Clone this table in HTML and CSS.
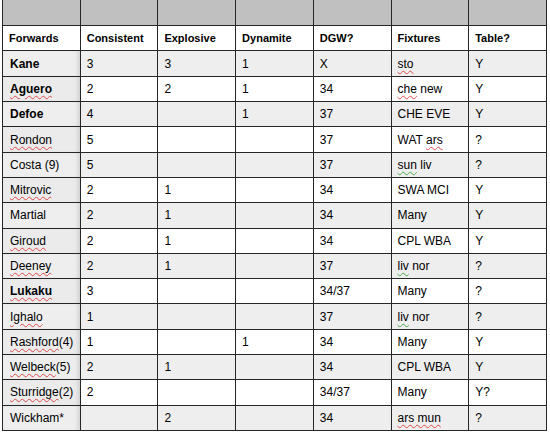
FILE: index.html
```html
<!DOCTYPE html>
<html>
<head>
<meta charset="utf-8">
<link rel="stylesheet" href="styles.css">
</head>
<body>
<table class="sheet">
  <tr class="band"><td></td><td></td><td></td><td></td><td></td><td></td><td></td></tr>
  <tr class="head"><td>Forwards</td><td>Consistent</td><td>Explosive</td><td>Dynamite</td><td>DGW?</td><td>Fixtures</td><td>Table?</td></tr>
  <tr class="alt"><td class="name"><b>Kane</b></td><td>3</td><td>3</td><td>1</td><td>X</td><td><span class="sp">sto</span></td><td>Y</td></tr>
  <tr><td class="name"><b class="sp">Aguero</b></td><td>2</td><td>2</td><td>1</td><td>34</td><td><span class="sp">che</span> new</td><td>Y</td></tr>
  <tr class="alt"><td class="name"><b>Defoe</b></td><td>4</td><td></td><td>1</td><td>37</td><td>CHE EVE</td><td>Y</td></tr>
  <tr><td class="name"><span class="sp">Rondon</span></td><td>5</td><td></td><td></td><td>37</td><td>WAT <span class="sp">ars</span></td><td>?</td></tr>
  <tr class="alt"><td class="name">Costa (9)</td><td>5</td><td></td><td></td><td>37</td><td><span class="gr">sun</span> liv</td><td>?</td></tr>
  <tr><td class="name"><span class="sp">Mitrovic</span></td><td>2</td><td>1</td><td></td><td>34</td><td>SWA MCI</td><td>Y</td></tr>
  <tr class="alt"><td class="name">Martial</td><td>2</td><td>1</td><td></td><td>34</td><td>Many</td><td>Y</td></tr>
  <tr><td class="name"><span class="sp">Giroud</span></td><td>2</td><td>1</td><td></td><td>34</td><td>CPL WBA</td><td>Y</td></tr>
  <tr class="alt"><td class="name"><span class="sp">Deeney</span></td><td>2</td><td>1</td><td></td><td>37</td><td><span class="gr">liv</span> nor</td><td>?</td></tr>
  <tr><td class="name"><b class="sp">Lukaku</b></td><td>3</td><td></td><td></td><td>34/37</td><td>Many</td><td>?</td></tr>
  <tr class="alt"><td class="name"><span class="sp">Ighalo</span></td><td>1</td><td></td><td></td><td>37</td><td><span class="gr">liv</span> nor</td><td>?</td></tr>
  <tr><td class="name"><span class="sp">Rashford</span>(4)</td><td>1</td><td></td><td>1</td><td>34</td><td>Many</td><td>Y</td></tr>
  <tr class="alt"><td class="name"><span class="sp">Welbeck</span>(5)</td><td>2</td><td>1</td><td></td><td>34</td><td>CPL WBA</td><td>Y</td></tr>
  <tr><td class="name"><span class="sp">Sturridge</span>(2)</td><td>2</td><td></td><td></td><td>34/37</td><td>Many</td><td>Y?</td></tr>
  <tr class="alt"><td class="name">Wickham*</td><td></td><td>2</td><td></td><td>34</td><td><span class="sp">ars mun</span></td><td>?</td></tr>
</table>
</body>
</html>
```

FILE: styles.css
```css
html, body {
  margin: 0;
  padding: 0;
  background: #ffffff;
}

.sheet {
  margin-left: 2px;
  width: 545px;
  table-layout: fixed;
  border-collapse: collapse;
  font-family: "Liberation Sans", Arial, sans-serif;
  font-size: 12px;
  color: #000;
}

.sheet td {
  border: 1px solid #262626;
  height: 24.3px;
  padding: 0 0 0 6px;
  vertical-align: middle;
  white-space: nowrap;
  overflow: hidden;
  background: #ffffff;
}

.sheet tr.band td {
  background: #c0c0c0;
  border-top: none;
  height: 25.2px;
}

.sheet tr.head td {
  font-weight: bold;
  font-size: 11px;
}

.sheet tr.alt td {
  background: #eeeeee;
}

.sheet td.name {
  background: #ebebeb;
  box-shadow: inset -4px 0 4px -2px rgba(0, 0, 0, 0.12);
  padding-left: 7px;
}

.sheet tr.head td:first-child {
  background: #ffffff;
  box-shadow: none;
}

.sp {
  text-decoration: underline wavy #e04848;
  text-decoration-thickness: 1px;
  text-underline-offset: 2px;
}

.gr {
  text-decoration: underline wavy #4aa84a;
  text-decoration-thickness: 1px;
  text-underline-offset: 2px;
}
```
